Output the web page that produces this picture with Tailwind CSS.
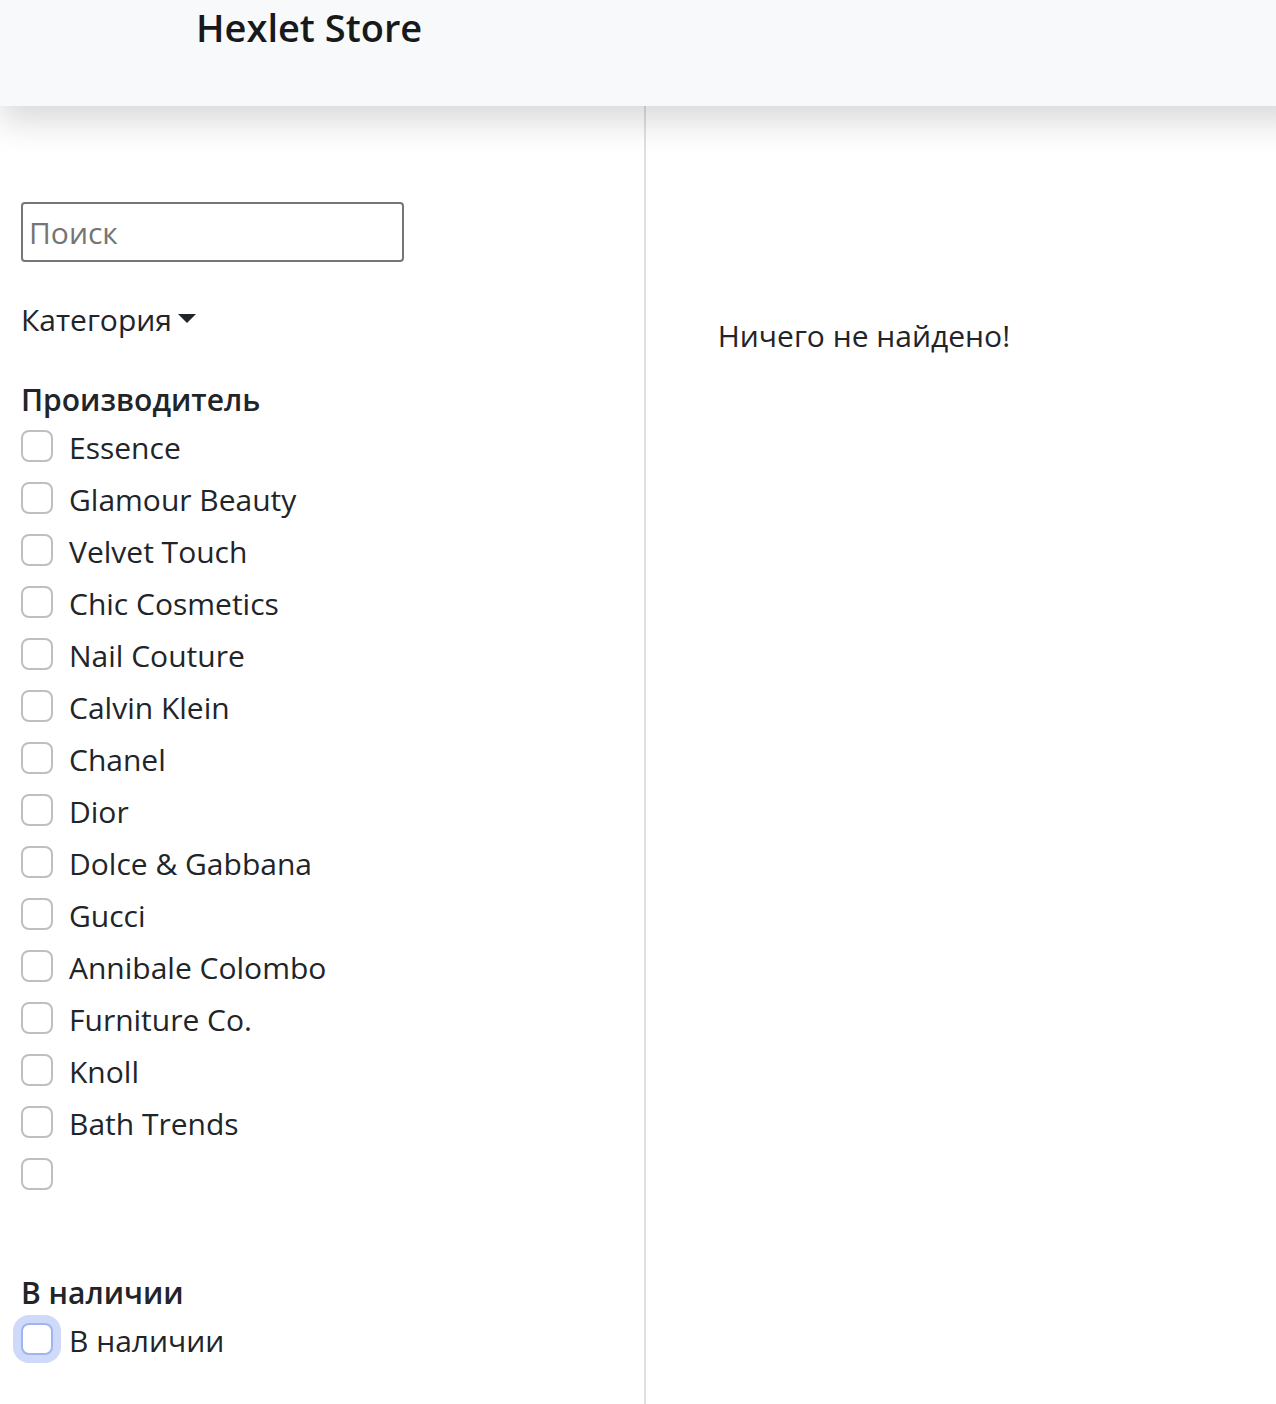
<!DOCTYPE html>
<html lang="ru">
<head>
<meta charset="utf-8">
<title>Hexlet Store</title>
<script src="https://cdn.jsdelivr.net/npm/@tailwindcss/browser@4"></script>
</head>
<body class="flex min-h-screen flex-col overflow-x-hidden bg-white font-['Open_Sans',sans-serif] text-[30px] leading-[48px] text-[#212529]">
<header class="relative z-10 -mr-8 bg-[#f8f9fb] pb-[52px] pl-[196px] shadow-[0_16px_32px_rgba(0,0,0,0.15)]">
<a href="#" class="block text-[38px] leading-[54px] font-semibold text-[#18191b]">Hexlet Store</a>
</header>
<main class="flex grow">
<aside class="w-[50.6%] shrink-0 border-r-2 border-[#dee0e2] pt-24 pb-10 pl-[21px]">
<input type="search" aria-label="Поиск" placeholder="Поиск" class="block h-[60px] w-[383px] rounded-[4px] border-2 border-[#767676] bg-white px-1.5 placeholder:text-[#757575]">
<button type="button" class="mt-[34px] flex items-center gap-1.5">Категория
<svg class="mb-1 h-[9px] w-[18px]" viewBox="0 0 18 9" aria-hidden="true"><path d="M0 0H18L9 9Z" fill="#212529"/></svg>
</button>
<fieldset class="mt-8">
<legend class="font-semibold">Производитель</legend>
<div class="flex flex-col gap-1">
<label class="flex items-center gap-4"><input type="checkbox" class="-mt-1 size-8 appearance-none rounded-lg border-2 border-[#bfbfbf] bg-white">Essence</label>
<label class="flex items-center gap-4"><input type="checkbox" class="-mt-1 size-8 appearance-none rounded-lg border-2 border-[#bfbfbf] bg-white">Glamour Beauty</label>
<label class="flex items-center gap-4"><input type="checkbox" class="-mt-1 size-8 appearance-none rounded-lg border-2 border-[#bfbfbf] bg-white">Velvet Touch</label>
<label class="flex items-center gap-4"><input type="checkbox" class="-mt-1 size-8 appearance-none rounded-lg border-2 border-[#bfbfbf] bg-white">Chic Cosmetics</label>
<label class="flex items-center gap-4"><input type="checkbox" class="-mt-1 size-8 appearance-none rounded-lg border-2 border-[#bfbfbf] bg-white">Nail Couture</label>
<label class="flex items-center gap-4"><input type="checkbox" class="-mt-1 size-8 appearance-none rounded-lg border-2 border-[#bfbfbf] bg-white">Calvin Klein</label>
<label class="flex items-center gap-4"><input type="checkbox" class="-mt-1 size-8 appearance-none rounded-lg border-2 border-[#bfbfbf] bg-white">Chanel</label>
<label class="flex items-center gap-4"><input type="checkbox" class="-mt-1 size-8 appearance-none rounded-lg border-2 border-[#bfbfbf] bg-white">Dior</label>
<label class="flex items-center gap-4"><input type="checkbox" class="-mt-1 size-8 appearance-none rounded-lg border-2 border-[#bfbfbf] bg-white">Dolce &amp; Gabbana</label>
<label class="flex items-center gap-4"><input type="checkbox" class="-mt-1 size-8 appearance-none rounded-lg border-2 border-[#bfbfbf] bg-white">Gucci</label>
<label class="flex items-center gap-4"><input type="checkbox" class="-mt-1 size-8 appearance-none rounded-lg border-2 border-[#bfbfbf] bg-white">Annibale Colombo</label>
<label class="flex items-center gap-4"><input type="checkbox" class="-mt-1 size-8 appearance-none rounded-lg border-2 border-[#bfbfbf] bg-white">Furniture Co.</label>
<label class="flex items-center gap-4"><input type="checkbox" class="-mt-1 size-8 appearance-none rounded-lg border-2 border-[#bfbfbf] bg-white">Knoll</label>
<label class="flex items-center gap-4"><input type="checkbox" class="-mt-1 size-8 appearance-none rounded-lg border-2 border-[#bfbfbf] bg-white">Bath Trends</label>
<label class="flex h-12 items-center gap-4"><input type="checkbox" aria-label="Без названия" class="-mt-1 size-8 appearance-none rounded-lg border-2 border-[#bfbfbf] bg-white"></label>
</div>
</fieldset>
<fieldset class="mt-[69px]">
<legend class="font-semibold">В наличии</legend>
<label class="flex items-center gap-4"><input type="checkbox" class="-mt-1 size-8 appearance-none rounded-lg border-2 border-[#9fb5ee] bg-white shadow-[0_0_0_8px_#cfdafb]">В наличии</label>
</fieldset>
</aside>
<section class="grow pt-[206px] pl-[72px]">
<p>Ничего не найдено!</p>
</section>
</main>
</body>
</html>
